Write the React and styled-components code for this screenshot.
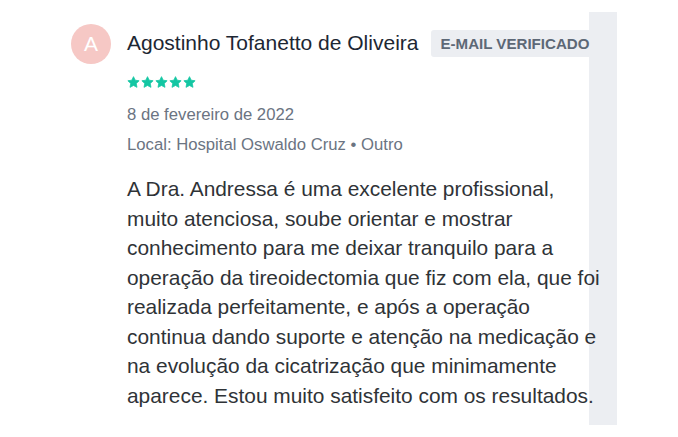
import styled, { createGlobalStyle } from "styled-components";

const GlobalStyle = createGlobalStyle`
  html, body {
    margin: 0;
    padding: 0;
    background: #ffffff;
  }
  body {
    font-family: "Liberation Sans", Arial, sans-serif;
    -webkit-font-smoothing: antialiased;
  }
`;

const review = {
  initial: "A",
  name: "Agostinho Tofanetto de Oliveira",
  badge: "E-mail verificado",
  rating: 5,
  date: "8 de fevereiro de 2022",
  place: "Local: Hospital Oswaldo Cruz • Outro",
  lines: [
    "A Dra. Andressa é uma excelente profissional,",
    "muito atenciosa, soube orientar e mostrar",
    "conhecimento para me deixar tranquilo para a",
    "operação da tireoidectomia que fiz com ela, que foi",
    "realizada perfeitamente, e após a operação",
    "continua dando suporte e atenção na medicação e",
    "na evolução da cicatrização que minimamente",
    "aparece. Estou muito satisfeito com os resultados.",
  ],
};

export default function App() {
  return (
    <>
      <GlobalStyle />
      <Page>
        <Review>
          <Avatar>{review.initial}</Avatar>
          <Body>
            <Header>
              <Name>{review.name}</Name>
              <Badge>{review.badge}</Badge>
            </Header>
            <Stars>
              {Array.from({ length: review.rating }).map((_, i) => (
                <Star key={i} />
              ))}
            </Stars>
            <Meta $top={17}>{review.date}</Meta>
            <Meta $top={10}>{review.place}</Meta>
            <Text>
              {review.lines.map((l, i) => (
                <span key={i}>
                  {l}
                  <br />
                </span>
              ))}
            </Text>
          </Body>
        </Review>
        <Strip />
      </Page>
    </>
  );
}

function Star() {
  return (
    <svg width="13" height="12" viewBox="0 0 24 23">
      <path
        d="M12 1.2l3.3 6.9 7.5 1-5.5 5.2 1.4 7.5L12 18.2l-6.7 3.6 1.4-7.5L1.2 9.1l7.5-1z"
        fill="#14c6a3"
        stroke="#14c6a3"
        strokeWidth="1.5"
        strokeLinejoin="round"
      />
    </svg>
  );
}

const Page = styled.div`
  display: flex;
  width: 678px;
  height: 437px;
  box-sizing: border-box;
  padding-left: 71px;
`;

/* the review text runs over the grey strip on its right */
const Review = styled.div`
  position: relative;
  z-index: 1;
  width: 518px;
  display: flex;
  gap: 16px;
  padding-top: 24px;
`;

const Avatar = styled.div`
  flex: none;
  width: 40px;
  height: 40px;
  border-radius: 50%;
  background: #f6c8c5;
  color: #ffffff;
  font-size: 21px;
  display: flex;
  align-items: center;
  justify-content: center;
`;

const Body = styled.div`
  display: flex;
  flex-direction: column;
  min-width: 0;
`;

const Header = styled.div`
  display: flex;
  align-items: center;
  gap: 13px;
  height: 38px;
  white-space: nowrap;
`;

const Name = styled.div`
  font-size: 21px;
  color: #1d2733;
`;

const Badge = styled.div`
  background: #eceef2;
  color: #5d6876;
  font-weight: bold;
  font-size: 15.1px;
  text-transform: uppercase;
  padding: 0 9px;
  height: 27px;
  line-height: 27px;
  border-radius: 3px;
`;

const Stars = styled.div`
  display: flex;
  gap: 1px;
  margin-top: 14px;
`;

const Meta = styled.div`
  margin-top: ${(p) => p.$top}px;
  font-size: 16.7px;
  line-height: 20px;
  color: #6b7482;
`;

const Text = styled.p`
  margin: 19px 0 0;
  font-size: 20.9px;
  line-height: 29.5px;
  color: #2f3337;
  white-space: nowrap;
`;

const Strip = styled.div`
  flex: none;
  width: 28px;
  height: 413px;
  margin-top: 12px;
  background: #eceef2;
`;
